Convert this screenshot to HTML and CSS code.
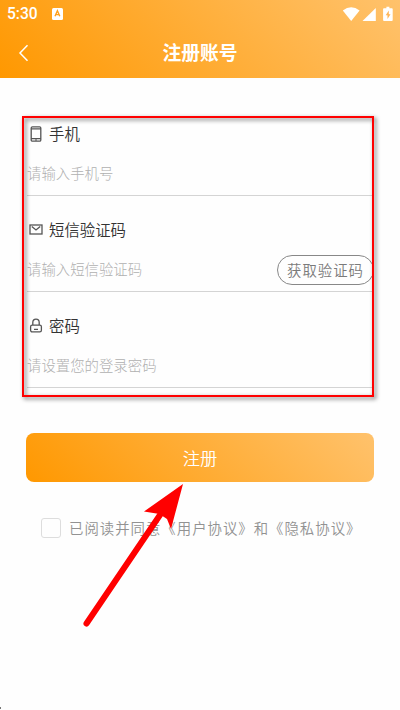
FILE: index.html
```html
<!DOCTYPE html>
<html lang="zh-CN">
<head>
<meta charset="utf-8">
<title>注册账号</title>
<link rel="stylesheet" href="styles.css">
</head>
<body>
<header class="header">
  <div class="status">
    <span class="time">5:30</span>
    <svg class="app-icon" width="11" height="12" viewBox="0 0 11 12"><rect width="11" height="12" rx="1.5" fill="#fff"/><path d="M3 8.3 5.4 2.8 7.8 8.3M3.8 6.6H7" fill="none" stroke="#ffa01c" stroke-width="1.4"/></svg>
    <svg class="signals" width="52" height="16" viewBox="0 0 52 16" fill="#fff"><path d="M.8 4.4Q9.2-1.9 17.6 4.4L9.2 15z"/><path d="M20.5 15H33.8V2z"/><path d="M42 2.2h2.4V.8h3v1.4h2.4q.9 0 .9.9v11q0 .9-.9.9H42q-.9 0-.9-.9v-11q0-.9.9-.9z"/><path d="M46.8 4.6 43.7 9.3h1.8v3.6l3-4.7h-1.7z" fill="#ffb555"/></svg>
  </div>
  <nav class="nav">
    <svg class="back" width="12" height="18" viewBox="0 0 12 18"><path d="M9.5 1.2 2 9l7.5 7.8" fill="none" stroke="#fff" stroke-width="1.5"/></svg>
    <h1 class="title">注册账号</h1>
  </nav>
</header>
<main class="content">
  <form class="form">
    <div class="field">
      <label class="label"><svg width="14" height="16" viewBox="0 0 14 16" fill="none" stroke="#555"><rect x="2.2" y=".9" width="9.6" height="14.2" rx="1.2" stroke-width="1.3"/><path d="M2 2.8h10M2 12.6h10" stroke-width="1.2"/><path d="M6 14h2"/></svg><span>手机</span></label>
      <div class="entry"><span>请输入手机号</span></div>
    </div>
    <div class="field">
      <label class="label"><svg width="14" height="16" viewBox="0 0 14 16" fill="none" stroke="#555" stroke-width="1.3"><rect x="1" y="3" width="12" height="9"/><path d="M2.8 4.5 7 8 11.2 4.5"/></svg><span>短信验证码</span></label>
      <div class="entry"><span>请输入短信验证码</span><button class="code" type="button">获取验证码</button></div>
    </div>
    <div class="field">
      <label class="label"><svg width="14" height="16" viewBox="0 0 14 16" fill="none" stroke="#555" stroke-width="1.3"><rect x="1.6" y="7.1" width="10.8" height="6.8" rx="1.6"/><path d="M3.8 7V4.4a3.2 3.2 0 0 1 6.4 0V7M5 11.4h4"/></svg><span>密码</span></label>
      <div class="entry"><span>请设置您的登录密码</span></div>
    </div>
  </form>
  <button class="submit" type="button">注册</button>
  <label class="agree"><span class="box"></span><span>已阅读并同意《用户协议》和《隐私协议》</span></label>
</main>
<div class="highlight"></div>
<svg class="arrow" width="110" height="150" viewBox="0 0 110 150"><path d="M6.5 143.5 84 29" stroke="#f00" stroke-width="6" stroke-linecap="round"/><path d="M103 4 64 31.5 79.5 34 87 39 91 49z" fill="#f00"/></svg>
<span class="corner"></span>
</body>
</html>
```
FILE: styles.css
```css
* { box-sizing: border-box; }
body {
  margin: 0;
  position: relative;
  width: 400px;
  height: 710px;
  overflow: hidden;
  background: #fefefe;
  font-family: "Noto Sans CJK SC", sans-serif;
}
.header {
  height: 78px;
  background: linear-gradient(45deg, #ff9800, #ffc26c);
  color: #fff;
}
.status {
  display: flex;
  align-items: center;
  height: 27px;
  padding: 0 6px 0 7px;
}
.time {
  width: 45px;
  padding-top: 1px;
  font: 500 15.6px/27px Roboto, sans-serif;
}
.signals { margin-left: auto; }
.nav {
  display: grid;
  grid-template-columns: 40px 1fr 40px;
  align-items: center;
  height: 51px;
}
.back { margin-left: 18px; }
.title {
  margin: 0;
  padding-bottom: 2px;
  font-size: 18.8px;
  line-height: 28px;
  font-weight: 700;
  text-align: center;
}
.content { padding: 22px 26px 0 27px; }
.field {
  height: 96px;
  padding-top: 22px;
  border-bottom: 1px solid #d4d4d4;
}
.label {
  display: flex;
  align-items: center;
  gap: 6px;
  height: 24px;
  padding-left: 2px;
  color: #333;
  font-size: 15.4px;
  font-weight: 350;
}
.label svg { margin-left: -.5px; margin-right: .5px; }
.label span, .entry span { padding-bottom: 2px; }
.entry {
  display: flex;
  align-items: center;
  justify-content: space-between;
  height: 30px;
  margin-top: 12px;
  color: #b0b0b0;
  font-size: 14.4px;
  font-weight: 300;
}
.code {
  width: 97px;
  height: 30px;
  padding: 0;
  margin-top: 2px;
  border: 1px solid #888;
  border-radius: 15px;
  background: none;
  color: #7a7a7a;
  font: 350 14.4px/28px "Noto Sans CJK SC", sans-serif;
  letter-spacing: 1px;
}
.submit {
  display: block;
  width: 348px;
  height: 49px;
  margin: 45px 0 0 -1px;
  padding: 0;
  border: 0;
  border-radius: 8px;
  background: linear-gradient(45deg, #ff9800, #ffc26c);
  color: #fff;
  font: 350 17.3px/48px "Noto Sans CJK SC", sans-serif;
}
.agree {
  display: flex;
  align-items: center;
  height: 24px;
  margin: 34px 0 0 14px;
  color: #929292;
  font-size: 14.4px;
  font-weight: 350;
  letter-spacing: 1px;
  white-space: nowrap;
}
.agree span:last-child { padding-bottom: 2px; }
.box {
  width: 20px;
  height: 20px;
  margin-right: 8px;
  border: 1px solid #ddd;
  border-radius: 3px;
}
.highlight {
  position: absolute;
  left: 22px;
  top: 116px;
  width: 352px;
  height: 281px;
  border: 2px solid #f00;
  filter: drop-shadow(2px 2px 2px rgba(0, 0, 0, .6));
}
.arrow {
  position: absolute;
  left: 80px;
  top: 480px;
}
.corner {
  position: absolute;
  left: 0;
  top: 707px;
  width: 1px;
  height: 2px;
  background: #777;
}
```
